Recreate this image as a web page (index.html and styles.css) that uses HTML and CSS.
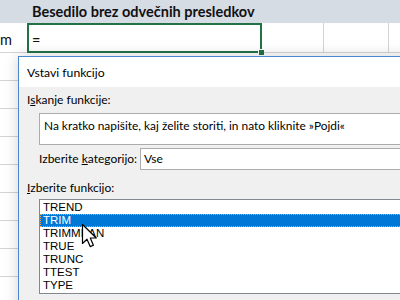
FILE: index.html
```html
<!DOCTYPE html>
<html>
<head>
<meta charset="utf-8">
<link rel="stylesheet" href="styles.css">
</head>
<body>
<div class="sheet">
  <div class="header">Besedilo brez odvečnih presledkov</div>
  <div class="row first">
    <div class="cell c0">m</div>
    <div class="cell c1"><span class="eq">=</span><div class="sel"><span class="handle"></span></div></div>
    <div class="cell c2"></div>
    <div class="cell c3"></div>
    <div class="cell c4"></div>
  </div>
  <div class="row"></div>
  <div class="row"></div>
  <div class="row"></div>
  <div class="row"></div>
  <div class="row"></div>
  <div class="row"></div>
  <div class="row"></div>
  <div class="row"></div>
</div>

<div class="dialog">
  <div class="title">Vstavi funkcijo</div>
  <div class="body">
    <div class="label">I<u>s</u>kanje funkcije:</div>
    <div class="search">Na kratko napišite, kaj želite storiti, in nato kliknite »Pojdi«</div>
    <div class="cat">
      <span class="catlabel">Izberite <u>k</u>ategorijo:</span>
      <div class="select">Vse</div>
    </div>
    <div class="label l2"><u>I</u>zberite funkcijo:</div>
    <div class="list">
      <div class="item">TREND</div>
      <div class="item active">TRIM</div>
      <div class="item">TRIMMEAN</div>
      <div class="item">TRUE</div>
      <div class="item">TRUNC</div>
      <div class="item">TTEST</div>
      <div class="item">TYPE</div>
    </div>
  </div>
  <svg class="cursor" width="18" height="26" viewBox="0 0 18 26">
    <path d="M1.5 1.5 L1.5 20.5 L6 16.2 L9.2 23.6 L12.4 22.2 L9.3 15 L15.3 15 Z" fill="#fff" stroke="#000" stroke-width="1.2" stroke-linejoin="round"/>
  </svg>
</div>
</body>
</html>
```

FILE: styles.css
```css
html, body {
  margin: 0;
  padding: 0;
}
body {
  width: 400px;
  height: 300px;
  overflow: hidden;
  background: #fff;
  position: relative;
  font-family: "Lato", sans-serif;
}
.sheet {
  width: 400px;
}
.header {
  height: 23px;
  background: #d6dce4;
  box-sizing: border-box;
  padding-left: 32px;
  font-family: "Lato", sans-serif;
  font-weight: 700;
  font-size: 14.5px;
  line-height: 23px;
  color: #111;
}
.row {
  height: 28px;
  box-sizing: border-box;
  border-bottom: 1px solid #d4d4d4;
  display: flex;
}
.row.first {
  height: 30px;
}
.cell {
  height: 100%;
  box-sizing: border-box;
  border-right: 1px solid #d4d4d4;
  font-family: "Lato", sans-serif;
  font-size: 14.5px;
  color: #111;
}
.c0 {
  width: 27px;
  border-right: none;
  padding-top: 7px;
  line-height: 20px;
}
.c1 {
  width: 235px;
  position: relative;
}
.eq {
  position: absolute;
  left: 5px;
  top: 8px;
  line-height: 20px;
}
.sel {
  position: absolute;
  left: 0;
  top: 0;
  right: -1px;
  bottom: -1px;
  border: 2px solid #217346;
}
.handle {
  position: absolute;
  right: -4px;
  bottom: -4px;
  width: 5px;
  height: 5px;
  background: #217346;
  border: 1px solid #fff;
  border-right: none;
  border-bottom: none;
}
.c2 { width: 62px; }
.c3 { width: 65px; }
.c4 { flex: 1; border-right: none; }

.dialog {
  position: absolute;
  left: 18px;
  top: 56px;
  width: 420px;
  height: 260px;
  border: 1px solid #4a87cc;
  background: #f0f0f0;
  box-shadow: 0 0 14px rgba(0, 0, 0, 0.18);
  font-family: "Lato", sans-serif;
  font-size: 12px;
  color: #000;
}
.title {
  height: 30px;
  background: #fff;
  padding-left: 8px;
  line-height: 30px;
  padding-top: 1px;
  box-sizing: border-box;
  font-size: 12.2px;
}
.body {
  padding: 5px 0 0 8px;
}
.label {
  line-height: 16px;
  white-space: nowrap;
}
.search {
  margin: 5px 0 0 12px;
  height: 32px;
  box-sizing: border-box;
  border: 1px solid #acacac;
  background: #fff;
  padding: 4px 0 0 4px;
  line-height: 16px;
  white-space: nowrap;
  font-size: 11.9px;
}
.cat {
  display: flex;
  align-items: center;
  margin: 3px 0 0 12px;
}
.catlabel {
  flex: 0 0 101px;
  line-height: 16px;
  white-space: nowrap;
}
.select {
  flex: 1;
  height: 22px;
  box-sizing: border-box;
  border: 1px solid #acacac;
  background: #fff;
  padding-left: 3px;
  line-height: 20px;
}
.l2 {
  margin-top: 10px;
}
.list {
  margin: 3px 0 0 12px;
  height: 95px;
  box-sizing: border-box;
  border: 1px solid #828790;
  background: #fff;
  padding-top: 1px;
  font-family: "Liberation Sans", sans-serif;
  font-size: 11.5px;
}
.item {
  height: 13px;
  line-height: 13px;
  padding-left: 3px;
  box-sizing: border-box;
}
.item.active {
  background: #0078d7;
  color: #fff;
  border: 1px dotted #f7a23c;
  padding-left: 2px;
  line-height: 11px;
}
.cursor {
  position: absolute;
  left: 62px;
  top: 166px;
}
```
